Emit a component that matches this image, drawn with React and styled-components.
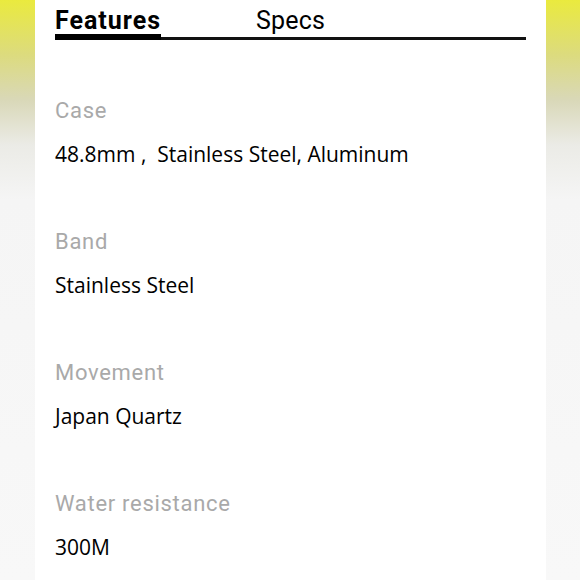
import React from "react";
import styled, { createGlobalStyle } from "styled-components";

const GlobalStyle = createGlobalStyle`
  html, body {
    margin: 0;
    padding: 0;
  }
  body {
    background: linear-gradient(
      to bottom,
      #eaea3e 0px,
      #dcdb7e 55px,
      #d9d8b8 100px,
      #ebebe6 145px,
      #f5f5f5 200px,
      #f8f8f8 100%
    );
    min-height: 580px;
  }
`;

const Page = styled.div`
  display: flex;
  justify-content: center;
  min-height: 580px;
`;

const Card = styled.div`
  width: 471px;
  background: #fff;
  padding: 0 20px;
  margin-left: 1px;
  min-height: 580px;
`;

const Tabs = styled.div`
  display: flex;
  gap: 95px;
  border-bottom: 3px solid #111;
  height: 37px;
`;

const Tab = styled.div`
  font-family: "Roboto", "DejaVu Sans", sans-serif;
  font-size: 25px;
  line-height: 1;
  padding-top: 8px;
  color: #000;
  font-weight: ${(p) => (p.$active ? 700 : 400)};
  letter-spacing: ${(p) => (p.$active ? "1px" : "0.2px")};
  box-sizing: border-box;
  height: 40px;
  border-bottom: ${(p) => (p.$active ? "6px solid #000" : "none")};
`;

const List = styled.div`
  display: flex;
  flex-direction: column;
  padding-top: 59px;
`;

const Item = styled.div`
  height: 131px;

  &:last-child {
    height: auto;
  }
`;

const Label = styled.div`
  font-family: "Roboto", "DejaVu Sans", sans-serif;
  font-size: 22px;
  line-height: 24px;
  letter-spacing: 0.7px;
  color: #a9a9a9;
`;

const Value = styled.div`
  font-family: "Open Sans", "Noto Sans", sans-serif;
  font-size: 21px;
  line-height: 24px;
  margin-top: 19px;
  color: #000;
  white-space: pre;
`;

const specs = [
  { label: "Case", value: "48.8mm ,  Stainless Steel, Aluminum" },
  { label: "Band", value: "Stainless Steel" },
  { label: "Movement", value: "Japan Quartz" },
  { label: "Water resistance", value: "300M" },
];

export default function App() {
  return (
    <Page>
      <GlobalStyle />
      <Card>
        <Tabs>
          <Tab $active>Features</Tab>
          <Tab>Specs</Tab>
        </Tabs>
        <List>
          {specs.map((s) => (
            <Item key={s.label}>
              <Label>{s.label}</Label>
              <Value>{s.value}</Value>
            </Item>
          ))}
        </List>
      </Card>
    </Page>
  );
}
